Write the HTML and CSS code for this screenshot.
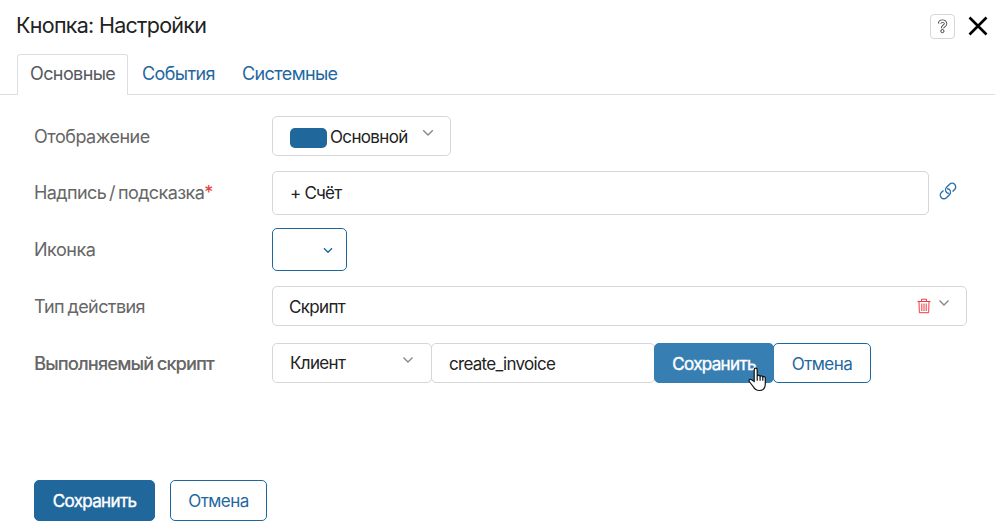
FILE: index.html
```html
<!DOCTYPE html>
<html lang="ru">
<head>
<meta charset="utf-8">
<title>Кнопка: Настройки</title>
<link rel="stylesheet" href="styles.css">
</head>
<body>
<main class="dialog">
  <header class="header">
    <h1 class="title">Кнопка: Настройки</h1>
    <button class="help" aria-label="Справка"><svg width="11" height="15" viewBox="0 0 11 15"><path class="help-outline" d="M2.600 4.700c.2-3.400 6-3.400 6 0 0 2.200-3.100 2.200-3.100 4.500"/><path class="help-fill" d="M2.600 4.700c.2-3.400 6-3.400 6 0 0 2.200-3.100 2.200-3.100 4.500"/><circle cx="5.400" cy="12.100" r="1.600"/></svg></button>
    <button class="close" aria-label="Закрыть"><svg width="20" height="20" viewBox="0 0 20 20"><path d="M1.500 1.500l17 17M18.500 1.500l-17 17"/></svg></button>
  </header>
  <nav class="tabs">
    <a class="tab tab-active">Основные</a>
    <a class="tab tab-events">События</a>
    <a class="tab tab-system">Системные</a>
  </nav>
  <form class="form">
    <div class="row">
      <label class="label">Отображение</label>
      <div class="box select-display"><span class="swatch"></span><span class="t-main">Основной</span><svg class="chevron" width="12" height="8" viewBox="0 0 12 8"><path d="M1.200 1.200L6 6l4.800-4.800"/></svg></div>
    </div>
    <div class="row row-caption">
      <label class="label l-caption">Надпись / подсказка<span class="required">*</span></label>
      <div class="box input-caption"><span class="t-bill">+ Счёт</span></div>
      <svg class="link" width="20" height="20" viewBox="0 0 20 20"><g transform="rotate(-45 10 10)"><path d="M9 12.200C8.300 11.600 8 10.800 8 10c0-2 1.600-3.600 3.600-3.600h4.200a3.600 3.600 0 0 1 0 7.200h-3"/><path d="M11 7.800c.7.600 1 1.400 1 2.200 0 2-1.600 3.600-3.600 3.600H4.200a3.600 3.600 0 0 1 0-7.200h3"/></g></svg>
    </div>
    <div class="row row-icon">
      <label class="label">Иконка</label>
      <div class="box select-icon"><svg class="chevron" width="10" height="7" viewBox="0 0 10 7"><path d="M1 1.200l4 4 4-4"/></svg></div>
    </div>
    <div class="row row-action">
      <label class="label l-action">Тип действия</label>
      <div class="box select-action"><span class="t-script">Скрипт</span><svg class="trash" width="14" height="16" viewBox="0 0 14 16"><path d="M.5 3.500h13M4.500 3V1.200h5V3M2 3.500l.3 11.200h9.400L12 3.500M4.800 5.500v7.500M7 5.500v7.500M9.200 5.500v7.500"/></svg><svg class="chevron" width="12" height="8" viewBox="0 0 12 8"><path d="M1.500 1.500L6 6l4.500-4.500"/></svg></div>
    </div>
    <div class="row row-script">
      <label class="label l-run">Выполняемый скрипт</label>
      <div class="box select-side"><span class="t-client">Клиент</span><svg class="chevron" width="12" height="8" viewBox="0 0 12 8"><path d="M1.500 1.500L6 6l4.500-4.500"/></svg></div>
      <div class="box input-name"><span class="t-name">create_invoice</span></div>
      <button type="button" class="btn btn-primary btn-hover">Сохранить<svg class="cursor" width="19" height="25" viewBox="0 0 19 25"><path d="M6.200 14.500V3c0-2.400 3-2.400 3 0v6.200c.2-1.400 2.900-1.200 2.900.5.300-1.300 2.700-1 2.700.6.400-1.200 2.500-.8 2.500.9v5.600c0 4-2.300 6.700-6 6.700-3.100 0-4.700-1.400-6.200-4L1.300 14.500c-.9-1.700 1-2.900 2.300-1.700zM9.200 9v4.800M12.100 9.700v4.100M14.800 10.300v3.500"/></svg></button>
      <button type="button" class="btn btn-outline">Отмена</button>
    </div>
  </form>
  <footer class="footer">
    <button class="btn btn-primary">Сохранить</button>
    <button class="btn btn-outline">Отмена</button>
  </footer>
</main>
</body>
</html>
```

FILE: styles.css
```css
* { box-sizing: border-box; }
body {
  margin: 0;
  background: #fff;
  color: #222;
  font-family: Inter, "Liberation Sans", sans-serif;
  font-size: 17px;
  line-height: 24px;
}
button { font: inherit; padding: 0; margin: 0; background: #fff; }
svg { fill: none; stroke: currentColor; display: block; flex: none; }
.dialog { height: 529px; display: flex; flex-direction: column; overflow: hidden; }
.header { height: 54px; padding: 0 7px 0 16px; display: flex; align-items: center; }
.title { margin: -4px auto 0 0; font-size: 21.5px; font-weight: 400; letter-spacing: -0.72px; }
.help { width: 25px; height: 25px; margin-top: -1px; border: 1px solid #d6d6d6; border-radius: 4px; display: grid; place-items: center; color: #444; }
.help-outline { stroke-width: 3.400; }
.help-fill { stroke: #fff; stroke-width: 1.600; }
.help circle { fill: #fff; }
.close { border: 0; margin: -2px 0 0 13px; color: #000; }
.close path { stroke-width: 2.600; }
.tabs { height: 41px; padding-left: 17px; display: flex; border-bottom: 1px solid #dcdee4; flex: none; }
.tab { height: 40px; padding-top: 8px; font-size: 18px; letter-spacing: -0.6px; color: #1f689f; white-space: nowrap; }
.tab-active { width: 111px; height: 41px; padding: 7px 0 0 12px; color: #555960; background: #fff; border: 1px solid #dcdee4; border-bottom: 0; border-radius: 3px 3px 0 0; }
.tab-events { margin-left: 14px; width: 100px; }
.form { padding: 21px 28px 0 34px; }
.row { display: flex; height: 40px; align-items: stretch; }
.row-caption { height: 44px; margin-top: 15px; }
.row-icon { height: 43px; margin-top: 13px; }
.row-action { margin-top: 15px; }
.row-script { margin-top: 17px; }
.label { width: 238px; flex: none; align-self: center; padding-top: 1px; font-size: 18px; letter-spacing: -0.48px; color: #666; white-space: nowrap; }
.l-caption { letter-spacing: -0.6px; word-spacing: -1.500px; padding-top: 0; }
.l-action { letter-spacing: -0.6px; word-spacing: -1px; padding-top: 2px; }
.required { color: #e53935; }
.l-run { text-shadow: 0.4px 0 0 #8a8a8a; letter-spacing: -0.58px; word-spacing: -1px; padding-top: 2px; }
.box { display: flex; align-items: center; border: 1px solid #d6d6d6; border-radius: 5px; letter-spacing: -0.65px; white-space: nowrap; padding: 0 17px; }
.t-bill { letter-spacing: -0.8px; }
.t-script, .t-name { padding-top: 2px; }
.t-name { letter-spacing: -0.72px; }
.chevron { color: #888; stroke-width: 1.400; margin: -6px 0 0 auto; }
.select-display { width: 179px; padding-right: 16px; }
.t-main { padding-top: 1px; }
.swatch { width: 37px; height: 20px; margin: 4px 3px 0 0; border-radius: 5px; background: #20679c; }
.input-caption { width: 657px; }
.link { margin: 10px 0 0 9px; color: #2c72aa; stroke-width: 1.400; }
.select-icon { width: 75px; border-color: #1f689f; padding-right: 13px; }
.select-icon .chevron { color: #1f689f; margin-top: 1px; }
.select-action { width: 695px; padding: 0 16px; }
.trash { margin: -1px 7px 0 auto; color: #ee3b45; }
.trash + .chevron { margin-left: 0; }
.select-side { width: 160px; }
.input-name { width: 224px; margin-left: -1px; }
.btn { height: 40px; border: 1px solid #1f689f; border-radius: 5px; letter-spacing: -0.55px; white-space: nowrap; color: #1f689f; width: 97px; padding-top: 1px; }
.btn-primary { width: 121px; background: #20679c; color: #fff; -webkit-text-stroke: 0.4px #fff; position: relative; letter-spacing: -0.65px; }
.row-script .btn-primary { background: #377eb3; border-color: #377eb3; margin-left: -1px; width: 120px; padding: 2px 0 0; }
.row-script .btn-outline { width: 98px; margin-left: -1px; padding: 2px 0 0; }
.cursor { position: absolute; left: 93px; top: 23px; z-index: 2; stroke: #111; fill: #fff; stroke-width: 1.200; -webkit-text-stroke: 0; }
.btn-hover { z-index: 1; }
.footer { margin-top: auto; padding: 0 34px 8px; display: flex; gap: 15px; }
.footer .btn { height: 41px; }
```
